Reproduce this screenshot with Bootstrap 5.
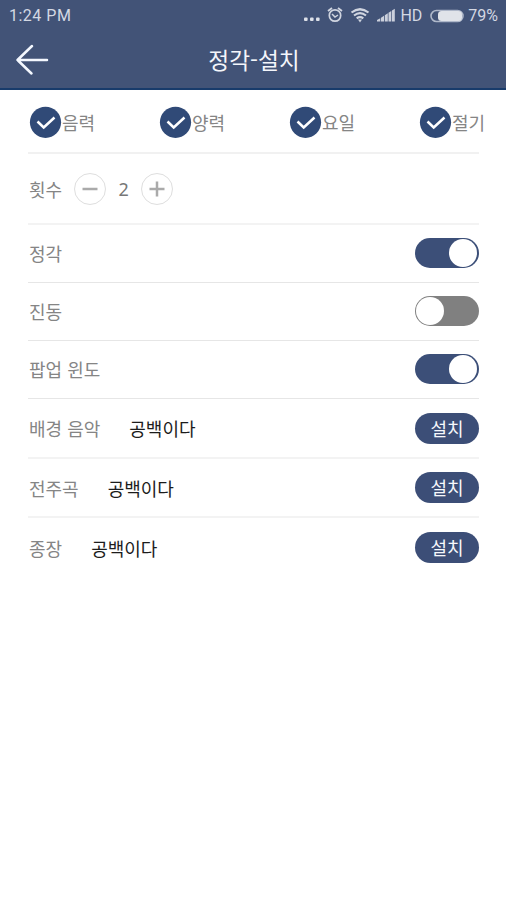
<!DOCTYPE html>
<html lang="ko">
<head>
<meta charset="utf-8">
<meta name="viewport" content="width=device-width, initial-scale=1">
<title>정각-설치</title>
<link rel="stylesheet" href="https://cdn.jsdelivr.net/npm/bootstrap@5.3.0/dist/css/bootstrap.min.css">
<style>
body{font-family:"Noto Sans CJK KR",sans-serif;font-size:18px;line-height:1;color:#858585;background:#fff;overflow:hidden}
svg{display:block;flex:none}
.app-head{height:90px;background:#425377;border-bottom:2px solid #183b6b}
.status{height:31px;padding:0 8px 0 9px;font:400 16px/31px Roboto,sans-serif;color:#d3d8e3}
.status .clock{letter-spacing:.5px}
.status .hd{margin-left:2px}
.title-row{height:57px;display:grid;grid-template-columns:60px 1fr 60px;padding:0 0 0 2px}
.title-row h1{font-size:22.7px;line-height:58px;font-weight:400;color:#f4f6fb}
.title-row button{padding:0 0 0 13px}
.checks{display:grid;grid-template-columns:130px 130px 130px 1fr;height:64px;margin-left:29px}
.sheet{margin:0 27px 0 28px}
.line{height:2px;background:#f1f1f1;margin-top:-2px}
.setting{height:58px;border-bottom:1px solid #e6e6e6;padding-bottom:1px}
.setting>span:first-child{margin-left:1px}
.setting.count{height:71px;border-bottom:2px solid #f3f3f3;padding:0}
.setting.pick{height:59.5px;border-bottom:2px solid #f3f3f3;padding:1px 0 0}
.setting.pick:last-child{border:0;padding:0}
.song{color:#1c1c1c;margin-left:29px}
.round{width:32px;height:32px;border:1px solid #dedede!important}
.round.less{margin-left:12px}
.num{width:35px;font:400 18px/1 "Noto Sans",sans-serif;color:#777}
.form-switch .form-check-input{width:64px;height:30px;margin:0;border:0;background-color:#808080;background-image:none;position:relative;float:none}
.form-switch .form-check-input::after{content:"";display:block;width:28px;height:28px;margin:1px;border-radius:50%;background:#fff}
.form-switch .form-check-input:checked{background-color:#3c4f78;background-image:none}
.form-switch .form-check-input:checked::after{margin-left:34px}
.set-btn{width:64px;height:31px;background:#3c4e77!important;color:#f6f8fc!important;font-size:18px;line-height:31px;border:0}
</style>
<script src="https://cdn.jsdelivr.net/npm/bootstrap@5.3.0/dist/js/bootstrap.bundle.min.js"></script>
</head>
<body>
<svg width="0" height="0" class="d-none"><symbol id="tick" viewBox="0 0 33 33"><circle cx="16.500" cy="16.300" r="15.600" fill="#304a77"/><path d="M8.500 15.500l6.200 6L25.500 11.500" fill="none" stroke="#fff" stroke-width="2.500"/></symbol></svg>
<header class="app-head">
  <div class="status d-flex align-items-center">
    <span class="clock me-auto">1:24 PM</span>
    <svg width="97" height="22" viewBox="0 0 97 22" fill="none" stroke="#d0d5e0">
      <g fill="#dde1e9" stroke="none"><rect x="3" y="12.500" width="3.600" height="3.600" rx="1"/><rect x="9" y="12.500" width="3.600" height="3.600" rx="1"/><rect x="15" y="12.500" width="3.600" height="3.600" rx="1"/></g>
      <circle cx="34" cy="10.500" r="5.700" stroke-width="1.700"/><path d="M27 6l4-3M41 6l-4-3" stroke-width="1.800"/><path d="M31 9l3 3 3-2" stroke-width="1.500"/>
      <path d="M50.500 7.500q8.500-6.500 17 0M53 10.500q6-4.600 12 0M55.700 13.300q3.300-2.400 6.600 0" stroke-width="2.200"/><path d="M57 14.500l2 3 2-3z" fill="#d0d5e0" stroke="none"/>
      <g fill="#cbd0dc" stroke="none"><path d="M76 16.500V15l3.300-1.700v3.200zM80 16.500v-3.800l3-2v5.800zM83.800 16.500v-6.300l3-2v8.300zM87.500 16.500V7.700l2.800-1.800v10.600zM91 16.500v-11l2.800-1.800v12.800z"/></g>
    </svg>
    <span class="hd">HD</span>
    <svg class="ms-2 me-1" width="34" height="14" viewBox="0 0 34 14"><rect x="1" y="1.500" width="32" height="11" rx="5.500" fill="none" stroke="#aeb7c9" stroke-width="1.600"/><rect x="8" y="2" width="24" height="10" rx="3.500" fill="#e0e3e9"/></svg>
    <span>79%</span>
  </div>
  <div class="title-row align-items-center">
    <button class="btn border-0" type="button" aria-label="뒤로"><svg width="34" height="32" viewBox="0 0 34 32" fill="none" stroke="#f4f8ff" stroke-width="2.500" stroke-linecap="round" stroke-linejoin="round"><path d="M17 2L2.500 16l14 13.500M2.500 16H32"/></svg></button>
    <h1 class="m-0 text-center">정각-설치</h1>
  </div>
</header>
<main>
  <div class="checks align-items-center">
    <div class="d-flex align-items-center"><svg width="33" height="33"><use href="#tick"/></svg><span>음력</span></div>
    <div class="d-flex align-items-center"><svg width="33" height="33"><use href="#tick"/></svg><span>양력</span></div>
    <div class="d-flex align-items-center"><svg width="33" height="33"><use href="#tick"/></svg><span>요일</span></div>
    <div class="d-flex align-items-center"><svg width="33" height="33"><use href="#tick"/></svg><span>절기</span></div>
  </div>
  <div class="sheet">
    <div class="line"></div>
    <div class="setting count d-flex align-items-center">
      <span>횟수</span>
      <button class="btn round less rounded-circle p-0 d-flex align-items-center justify-content-center" type="button" aria-label="감소"><svg width="16" height="16" stroke="#aaa" stroke-width="2.500"><path d="M.5 8h15"/></svg></button>
      <span class="num text-center">2</span>
      <button class="btn round rounded-circle p-0 d-flex align-items-center justify-content-center" type="button" aria-label="증가"><svg width="16" height="16" stroke="#aaa" stroke-width="2.500"><path d="M.5 8h15M8 .5v15"/></svg></button>
    </div>
    <div class="setting d-flex align-items-center justify-content-between"><span>정각</span><div class="form-switch p-0"><input class="form-check-input" type="checkbox" role="switch" aria-label="정각" checked></div></div>
    <div class="setting d-flex align-items-center justify-content-between"><span>진동</span><div class="form-switch p-0"><input class="form-check-input" type="checkbox" role="switch" aria-label="진동"></div></div>
    <div class="setting d-flex align-items-center justify-content-between"><span>팝업 윈도</span><div class="form-switch p-0"><input class="form-check-input" type="checkbox" role="switch" aria-label="팝업 윈도" checked></div></div>
    <div class="setting pick d-flex align-items-center"><span>배경 음악</span><span class="song">공백이다</span><button class="btn set-btn rounded-pill p-0 ms-auto" type="button">설치</button></div>
    <div class="setting pick d-flex align-items-center"><span>전주곡</span><span class="song">공백이다</span><button class="btn set-btn rounded-pill p-0 ms-auto" type="button">설치</button></div>
    <div class="setting pick d-flex align-items-center"><span>종장</span><span class="song">공백이다</span><button class="btn set-btn rounded-pill p-0 ms-auto" type="button">설치</button></div>
  </div>
</main>
</body>
</html>
